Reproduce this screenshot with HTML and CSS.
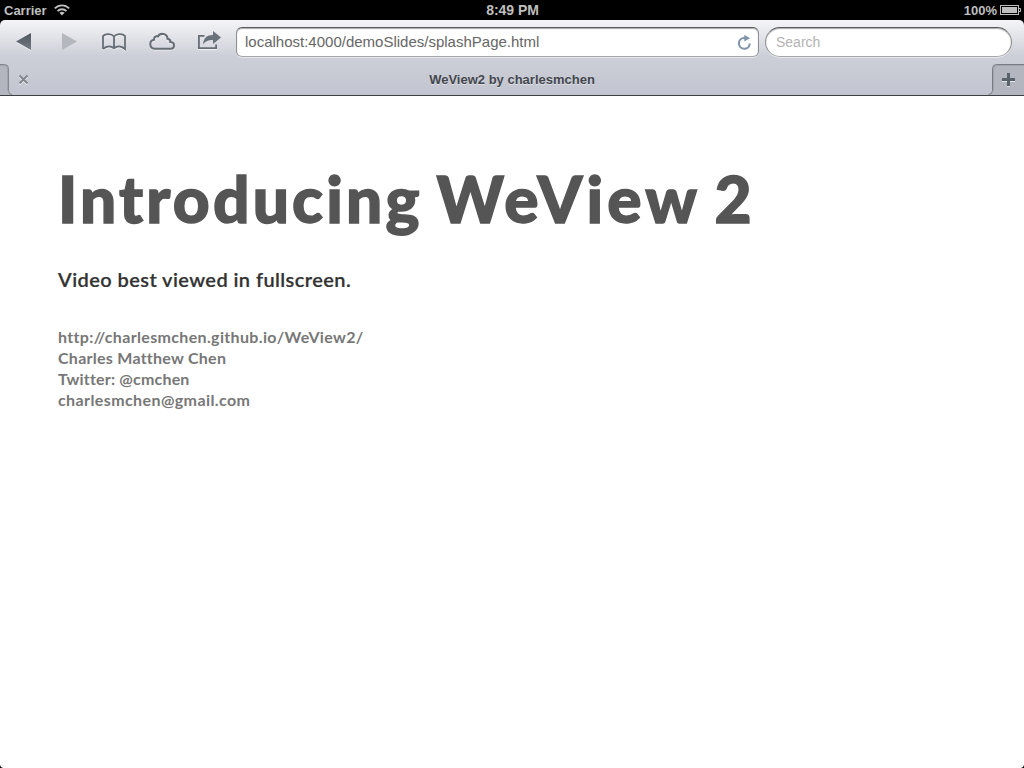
FILE: index.html
```html
<!DOCTYPE html>
<html lang="en">
<head>
<meta charset="utf-8">
<title>WeView2 by charlesmchen</title>
<link rel="stylesheet" href="styles.css">
</head>
<body>
<div class="device">
  <header class="status">
    <div class="status-left"><span>Carrier</span>
      <svg class="wifi" width="16" height="12" viewBox="0 0 16 12"><g fill="none" stroke="#bfbfbf" stroke-width="1.9"><path d="M.8 4.4C4.8.3 11.2.3 15.2 4.4"/><path d="M3.5 7.1c2.5-2.5 6.5-2.5 9 0"/></g><path d="M5.4 8.8c1.4-1.3 3.8-1.3 5.2 0L8 11.4z" fill="#bfbfbf"/></svg>
    </div>
    <div class="clock">8:49 PM</div>
    <div class="status-right"><span>100%</span>
      <svg width="21" height="10" viewBox="0 0 21 10"><rect x=".5" y=".5" width="18" height="9" fill="none" stroke="#bfbfbf"/><path d="M2 2h15v6H2z" fill="#bfbfbf"/><path d="M19 3.5h1.500v3H19" fill="none" stroke="#bfbfbf"/></svg>
    </div>
  </header>
  <div class="browser">
    <nav class="toolbar">
      <div class="icons">
        <svg width="236" height="44" viewBox="0 0 236 44">
          <defs><linearGradient id="ink" x1="0" y1="0" x2="0" y2="1"><stop offset="0" stop-color="#50565d"/><stop offset="1" stop-color="#737b84"/></linearGradient></defs>
          <path d="M16 22.500L31 14v17z" fill="#fff" opacity=".6"/>
          <path d="M16 21.500L31 13v17z" fill="url(#ink)"/>
          <path d="M77 21.500L62 13v17z" fill="#b4b7bc"/>
          <g fill="none" stroke="#fff" stroke-width="1.800" opacity=".65" transform="translate(0 1)">
            <path d="M103 29V16C105.500 13.500 111.500 13.500 114 16.500C116.500 13.500 122.500 13.500 125 16V29C121.500 25.800 117 25.800 114 28.300C111 25.800 106.500 25.800 103 29"/>
            <path d="M154.500 28.700a4.500 4.500 0 0 1-.6-8.900q.3-4.200 4-3.300c2.500-4.500 9.500-2.700 9.600 2.300q3 .3 2.800 3.200c5.200.4 4.700 6.700.2 6.700z"/>
          </g>
          <g fill="none" stroke="#666d75" stroke-width="1.800">
            <path d="M103 29V16C105.500 13.500 111.500 13.500 114 16.500C116.500 13.500 122.500 13.500 125 16V29C121.500 25.800 117 25.800 114 28.300C111 25.800 106.500 25.800 103 29M114 16.500v12"/>
            <path stroke-width="2" d="M154.500 28.700a4.500 4.500 0 0 1-.6-8.900q.3-4.200 4-3.300c2.500-4.500 9.500-2.700 9.600 2.300q3 .3 2.800 3.200c5.200.4 4.700 6.700.2 6.700z"/>
            <path d="M204.500 15.900h-5.600v12.200h17.200v-3.600"/>
          </g>
          <path d="M198 29.600h19" stroke="#f4f4f7" fill="none"/>
          <path d="M203 24.500c.5-6.500 4-9.500 10-9.500V11l8 6.500-8 6.500v-4c-4.500 0-7.500 1-10 4.500z" fill="#69717a"/>
        </svg>
      </div>
      <div class="address"><span>localhost:4000/demoSlides/splashPage.html</span>
        <svg width="15" height="17" viewBox="0 0 15 17"><path d="M8.800 4H7A5.400 5.400 0 1 0 12.700 9.500" fill="none" stroke="#8093aa" stroke-width="2.100"/><path d="M7.300.8L13 4.300 7.300 7.600z" fill="#8093aa"/></svg>
      </div>
      <div class="search">Search</div>
    </nav>
    <div class="tabs">
      <svg width="12" height="31" viewBox="0 0 12 31"><path d="M0 .5h4.500q4 0 4 4v22q0 4 3.500 4.500H0z" fill="#b3b5bf"/><path d="M0 1.500h4q3.500 0 3.500 3.500v22" fill="none" stroke="#a2a4ad"/><path d="M0 .5h4.500q4 0 4 4v22q0 4 3.500 4" fill="none" stroke="#85868e"/></svg>
      <svg class="close" width="11" height="11" viewBox="0 0 11 11"><path d="M1.500 2.500l8 8m0-8l-8 8" stroke="#f2f2f5" stroke-width="2"/><path d="M1.500 1.500l8 8m0-8l-8 8" stroke="#84868d" stroke-width="2"/></svg>
      <div class="tab-title">WeView2 by charlesmchen</div>
      <svg width="36" height="31" viewBox="0 0 36 31"><path d="M36 .5H8.500q-4 0-4 4v22q0 4-3.500 4.500h35z" fill="#b3b5bf"/><path d="M36 1.500H9q-3.500 0-3.500 3.500v22" fill="none" stroke="#a2a4ad"/><path d="M36 .5H8.500q-4 0-4 4v22q0 4-4 4" fill="none" stroke="#7b7c83"/><path d="M14 16.500h13M20.500 10v13" stroke="#e3e4e9" stroke-width="3"/><path d="M14 15.500h13M20.500 9v13" stroke="#59616a" stroke-width="3"/></svg>
    </div>
  </div>
  <main class="page">
    <h1 class="title">Introducing <span class="name">WeView 2</span></h1>
    <p class="note">Video best viewed in fullscreen.</p>
    <div class="contact">
      <div class="url">http://charlesmchen.github.io/WeView2/</div>
      <div class="person">Charles Matthew Chen</div>
      <div class="twitter">Twitter: @cmchen</div>
      <div class="mail">charlesmchen@gmail.com</div>
    </div>
  </main>
</div>
</body>
</html>
```
FILE: styles.css
```css
* { box-sizing: border-box; }
body { margin: 0; background: #000; font-family: "Liberation Sans", Arial, sans-serif; }
svg { display: block; flex: none; }
.device { width: 1024px; height: 768px; display: flex; flex-direction: column; overflow: hidden; background: #000; white-space: nowrap; }
.status { height: 20px; flex: none; display: grid; grid-template-columns: 1fr auto 1fr; align-items: center; padding: 0 3px 0 4px; color: #bfbfbf; font-size: 13px; font-weight: bold; line-height: 19px; }
.status-left, .status-right { display: flex; align-items: center; }
.status-left { gap: 7px; }
.status-right { justify-content: flex-end; gap: 3px; }
.clock { font-size: 14px; letter-spacing: -.05px; }
.browser { height: 76px; flex: none; border-radius: 5px 5px 0 0; border-bottom: 1px solid #3d3e43; background: linear-gradient(#f5f5f7, #cdcfd8 48%, #c2c4cf); }
.toolbar { height: 44px; display: flex; align-items: flex-start; }
.icons { width: 236px; height: 44px; }
.address, .search { height: 30px; margin-top: 7px; background: #fff; border: 1px solid #8d8e92; border-top: 1px solid #5b5c60; border-bottom-color: #a5a6aa; box-shadow: inset 0 1px 1px #aaa, 0 1px 0 #e7e8ed; line-height: 28px; }
.address { width: 523px; border-radius: 6px; padding: 0 6px 0 8px; display: flex; align-items: center; justify-content: space-between; color: #666; font-size: 15px; }
.search { width: 247px; margin-left: 6px; border-radius: 15px; padding-left: 10px; color: #b3b3b3; font-size: 14px; }
.tabs { height: 31px; display: flex; align-items: flex-start; }
.close { margin: 10px 0 0 6px; }
.tab-title { flex: 1; padding-left: 7px; text-align: center; font-size: 13px; line-height: 31px; font-weight: bold; color: #43464d; text-shadow: 0 1px #dfe0e6; }
.page { flex: 1; padding: 63px 58px 0; background: #fff; border-radius: 0 0 4px 4px; font-family: Lato, sans-serif; }
.title { margin: 0; font-size: 64px; line-height: 80px; font-weight: 900; color: #555; letter-spacing: 3.15px; word-spacing: -4.4px; -webkit-text-stroke: 1.4px #555; }
.name { letter-spacing: 4.1px; word-spacing: -4.5px; }
.note { margin: 27px 0 0; font-size: 20px; line-height: 26px; font-weight: 600; color: #333; letter-spacing: .42px; -webkit-text-stroke: .2px #333; }
.contact { margin-top: 34px; font-size: 16px; line-height: 21px; font-weight: 700; color: #777; }
.url { letter-spacing: .34px; }
.person { letter-spacing: .26px; }
.twitter { letter-spacing: .2px; }
.mail { letter-spacing: .4px; }
```
